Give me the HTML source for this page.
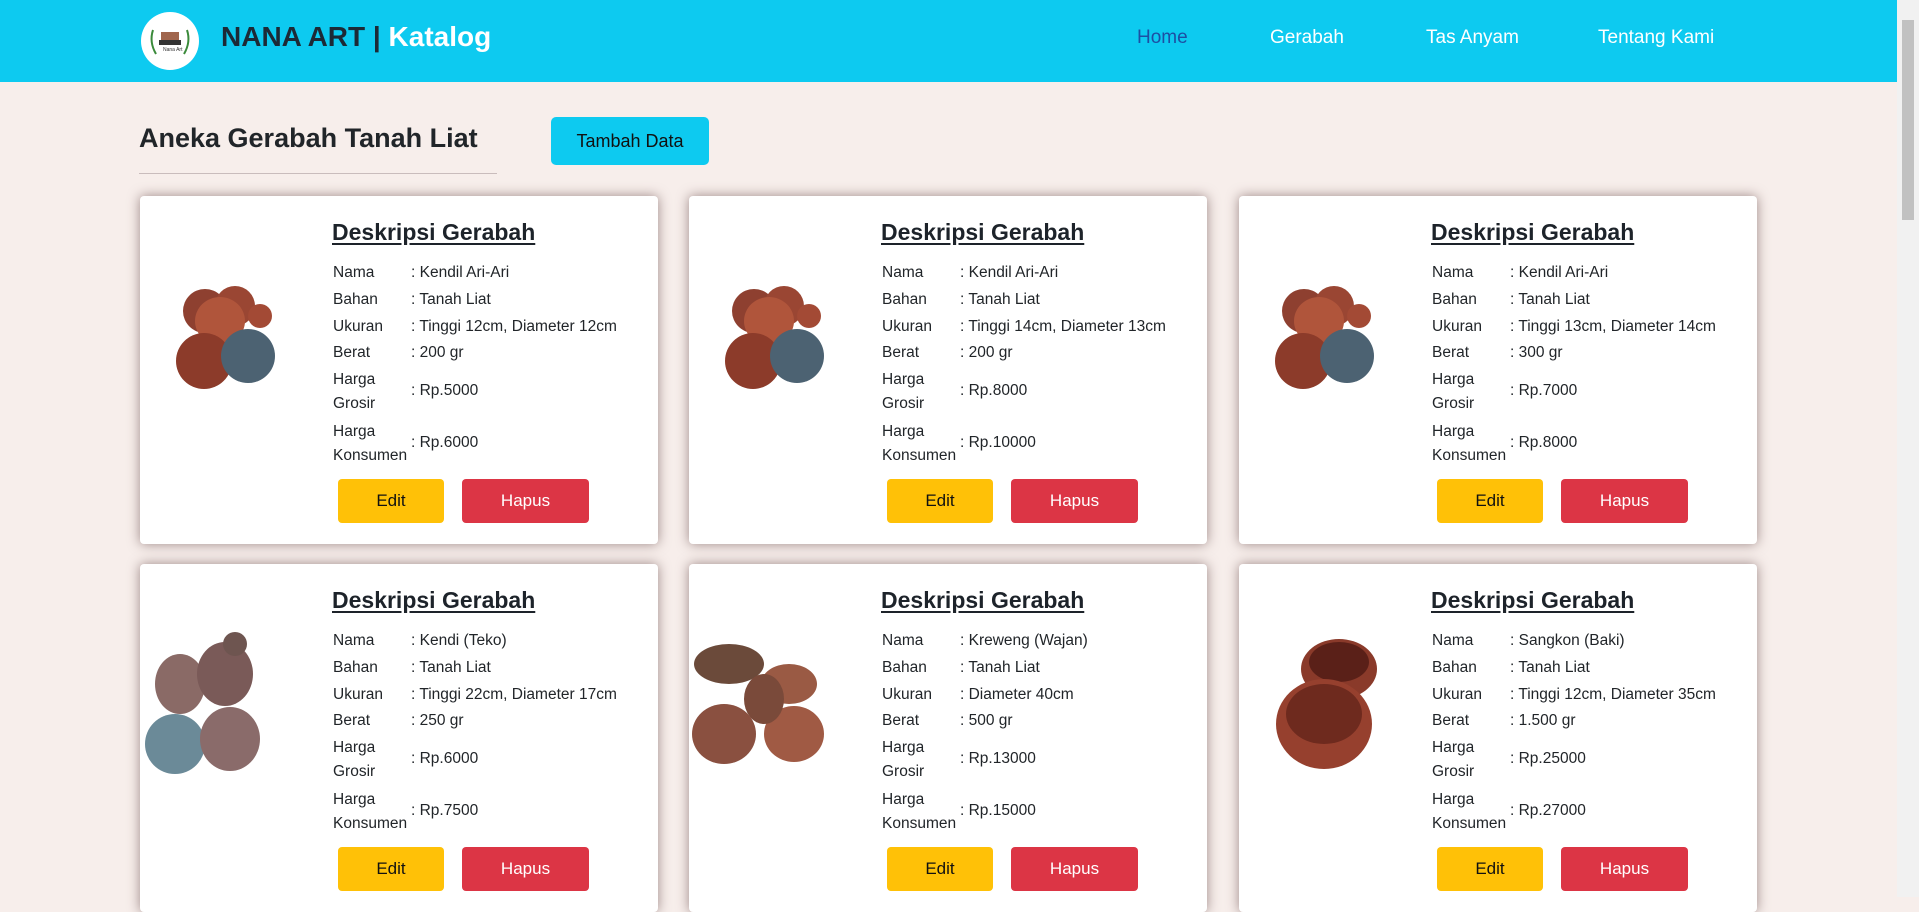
<!DOCTYPE html>
<html><head><meta charset="utf-8">
<style>
*{margin:0;padding:0;box-sizing:border-box}
body{width:1919px;height:897px;overflow:hidden;background:#f7eeeb;font-family:"Liberation Sans",sans-serif;color:#212529;position:relative}
.hdr{position:absolute;left:0;top:0;width:1897px;height:82px;background:#0dcaf0}
.logo{position:absolute;left:141px;top:12px;width:58px;height:58px;border-radius:50%;background:#fff}
.brand{position:absolute;left:221px;top:21px;font-size:28px;font-weight:bold;color:#1c2a36;white-space:nowrap}
.brand b{color:#fff}
.nav{position:absolute;top:27px;font-size:19px;color:#fff}
.sb{position:absolute;right:0;top:0;width:22px;height:897px;background:#f1f1f1}
.sb div{position:absolute;left:5px;top:20px;width:12px;height:200px;background:#c1c1c1}
h2{position:absolute;left:139px;top:123px;font-size:27px;font-weight:bold;color:#212529}
.hr{position:absolute;left:139px;top:173px;width:358px;height:1px;background:#c9bcbc}
.add{position:absolute;left:551px;top:117px;width:158px;height:48px;background:#0dcaf0;border-radius:5px;font-size:18px;text-align:center;line-height:48px;color:#111}
.card{position:absolute;width:518px;height:348px;background:#fff;border-radius:4px;box-shadow:0 0 12px rgba(80,50,50,.55)}
.card .t{position:absolute;left:192px;top:23px;font-size:23px;font-weight:bold;text-decoration:underline;text-underline-offset:3px;color:#1d232a}
.r{position:absolute;left:193px;font-size:15.5px;line-height:24px;color:#212529}
.c{position:absolute;left:271px;font-size:15.5px;line-height:24px}
.bE,.bH{position:absolute;top:283px;height:44px;border-radius:4px;text-align:center;line-height:44px;font-size:17px}
.bE{left:198px;width:106px;background:#ffc107;color:#111}
.bH{left:322px;width:127px;background:#dc3545;color:#fff}
.img{position:absolute;left:0;top:40px}
</style></head><body>
<div class="hdr">
<div class="logo"><svg width="58" height="58"><path d="M12 18q-4 12 3 24M46 18q4 12-3 24" stroke="#3a8a3a" stroke-width="2" fill="none"/><rect x="20" y="20" width="18" height="10" fill="#a0654d"/><rect x="18" y="28" width="22" height="5" fill="#333"/><text x="22" y="39" font-size="5" fill="#333">Nana Art</text></svg></div>
<div class="brand">NANA ART | <b>Katalog</b></div>
<div class="nav" style="left:1137px;color:#1d4fa3">Home</div>
<div class="nav" style="left:1270px">Gerabah</div>
<div class="nav" style="left:1426px">Tas Anyam</div>
<div class="nav" style="left:1598px">Tentang Kami</div>
</div>
<div class="sb"><div></div></div>
<h2>Aneka Gerabah Tanah Liat</h2>
<div class="hr"></div>
<div class="add">Tambah Data</div>

<div class="card" style="left:140px;top:196px">
<svg class="img" width="160" height="190"><circle cx="65" cy="75" r="22" fill="#8e4030"/><circle cx="95" cy="70" r="20" fill="#9a4633"/><ellipse cx="80" cy="85" rx="25" ry="24" fill="#b0553b"/><circle cx="64" cy="125" r="28" fill="#8c3b2a"/><circle cx="108" cy="120" r="27" fill="#4c6272"/><circle cx="120" cy="80" r="12" fill="#a34a35"/></svg>
<div class="t">Deskripsi Gerabah</div>
<div class="r" style="top:65px">Nama</div><div class="c" style="top:65px">: Kendil Ari-Ari</div>
<div class="r" style="top:92px">Bahan</div><div class="c" style="top:92px">: Tanah Liat</div>
<div class="r" style="top:119px">Ukuran</div><div class="c" style="top:119px">: Tinggi 12cm, Diameter 12cm</div>
<div class="r" style="top:145px">Berat</div><div class="c" style="top:145px">: 200 gr</div>
<div class="r" style="top:172px">Harga<br>Grosir</div><div class="c" style="top:183px">: Rp.5000</div>
<div class="r" style="top:224px">Harga<br>Konsumen</div><div class="c" style="top:235px">: Rp.6000</div>
<div class="bE">Edit</div><div class="bH">Hapus</div></div>

<div class="card" style="left:689px;top:196px">
<svg class="img" width="160" height="190"><circle cx="65" cy="75" r="22" fill="#8e4030"/><circle cx="95" cy="70" r="20" fill="#9a4633"/><ellipse cx="80" cy="85" rx="25" ry="24" fill="#b0553b"/><circle cx="64" cy="125" r="28" fill="#8c3b2a"/><circle cx="108" cy="120" r="27" fill="#4c6272"/><circle cx="120" cy="80" r="12" fill="#a34a35"/></svg>
<div class="t">Deskripsi Gerabah</div>
<div class="r" style="top:65px">Nama</div><div class="c" style="top:65px">: Kendil Ari-Ari</div>
<div class="r" style="top:92px">Bahan</div><div class="c" style="top:92px">: Tanah Liat</div>
<div class="r" style="top:119px">Ukuran</div><div class="c" style="top:119px">: Tinggi 14cm, Diameter 13cm</div>
<div class="r" style="top:145px">Berat</div><div class="c" style="top:145px">: 200 gr</div>
<div class="r" style="top:172px">Harga<br>Grosir</div><div class="c" style="top:183px">: Rp.8000</div>
<div class="r" style="top:224px">Harga<br>Konsumen</div><div class="c" style="top:235px">: Rp.10000</div>
<div class="bE">Edit</div><div class="bH">Hapus</div></div>

<div class="card" style="left:1239px;top:196px">
<svg class="img" width="160" height="190"><circle cx="65" cy="75" r="22" fill="#8e4030"/><circle cx="95" cy="70" r="20" fill="#9a4633"/><ellipse cx="80" cy="85" rx="25" ry="24" fill="#b0553b"/><circle cx="64" cy="125" r="28" fill="#8c3b2a"/><circle cx="108" cy="120" r="27" fill="#4c6272"/><circle cx="120" cy="80" r="12" fill="#a34a35"/></svg>
<div class="t">Deskripsi Gerabah</div>
<div class="r" style="top:65px">Nama</div><div class="c" style="top:65px">: Kendil Ari-Ari</div>
<div class="r" style="top:92px">Bahan</div><div class="c" style="top:92px">: Tanah Liat</div>
<div class="r" style="top:119px">Ukuran</div><div class="c" style="top:119px">: Tinggi 13cm, Diameter 14cm</div>
<div class="r" style="top:145px">Berat</div><div class="c" style="top:145px">: 300 gr</div>
<div class="r" style="top:172px">Harga<br>Grosir</div><div class="c" style="top:183px">: Rp.7000</div>
<div class="r" style="top:224px">Harga<br>Konsumen</div><div class="c" style="top:235px">: Rp.8000</div>
<div class="bE">Edit</div><div class="bH">Hapus</div></div>

<div class="card" style="left:140px;top:564px">
<svg class="img" width="160" height="190"><ellipse cx="40" cy="80" rx="25" ry="30" fill="#8a6a66"/><ellipse cx="85" cy="70" rx="28" ry="32" fill="#7a5a58"/><ellipse cx="35" cy="140" rx="30" ry="30" fill="#6b8a98"/><ellipse cx="90" cy="135" rx="30" ry="32" fill="#8a6b6a"/><circle cx="95" cy="40" r="12" fill="#6e5550"/></svg>
<div class="t">Deskripsi Gerabah</div>
<div class="r" style="top:65px">Nama</div><div class="c" style="top:65px">: Kendi (Teko)</div>
<div class="r" style="top:92px">Bahan</div><div class="c" style="top:92px">: Tanah Liat</div>
<div class="r" style="top:119px">Ukuran</div><div class="c" style="top:119px">: Tinggi 22cm, Diameter 17cm</div>
<div class="r" style="top:145px">Berat</div><div class="c" style="top:145px">: 250 gr</div>
<div class="r" style="top:172px">Harga<br>Grosir</div><div class="c" style="top:183px">: Rp.6000</div>
<div class="r" style="top:224px">Harga<br>Konsumen</div><div class="c" style="top:235px">: Rp.7500</div>
<div class="bE">Edit</div><div class="bH">Hapus</div></div>

<div class="card" style="left:689px;top:564px">
<svg class="img" width="160" height="190"><ellipse cx="40" cy="60" rx="35" ry="20" fill="#6b4a3a"/><ellipse cx="100" cy="80" rx="28" ry="20" fill="#9a5a44"/><ellipse cx="35" cy="130" rx="32" ry="30" fill="#8a5040"/><ellipse cx="105" cy="130" rx="30" ry="28" fill="#a05a44"/><ellipse cx="75" cy="95" rx="20" ry="25" fill="#7a4a3a"/></svg>
<div class="t">Deskripsi Gerabah</div>
<div class="r" style="top:65px">Nama</div><div class="c" style="top:65px">: Kreweng (Wajan)</div>
<div class="r" style="top:92px">Bahan</div><div class="c" style="top:92px">: Tanah Liat</div>
<div class="r" style="top:119px">Ukuran</div><div class="c" style="top:119px">: Diameter 40cm</div>
<div class="r" style="top:145px">Berat</div><div class="c" style="top:145px">: 500 gr</div>
<div class="r" style="top:172px">Harga<br>Grosir</div><div class="c" style="top:183px">: Rp.13000</div>
<div class="r" style="top:224px">Harga<br>Konsumen</div><div class="c" style="top:235px">: Rp.15000</div>
<div class="bE">Edit</div><div class="bH">Hapus</div></div>

<div class="card" style="left:1239px;top:564px">
<svg class="img" width="160" height="190"><ellipse cx="100" cy="65" rx="38" ry="30" fill="#8a3a2a"/><ellipse cx="100" cy="58" rx="30" ry="20" fill="#5a2018"/><ellipse cx="85" cy="120" rx="48" ry="45" fill="#96402e"/><ellipse cx="85" cy="110" rx="38" ry="30" fill="#6e2a1e"/></svg>
<div class="t">Deskripsi Gerabah</div>
<div class="r" style="top:65px">Nama</div><div class="c" style="top:65px">: Sangkon (Baki)</div>
<div class="r" style="top:92px">Bahan</div><div class="c" style="top:92px">: Tanah Liat</div>
<div class="r" style="top:119px">Ukuran</div><div class="c" style="top:119px">: Tinggi 12cm, Diameter 35cm</div>
<div class="r" style="top:145px">Berat</div><div class="c" style="top:145px">: 1.500 gr</div>
<div class="r" style="top:172px">Harga<br>Grosir</div><div class="c" style="top:183px">: Rp.25000</div>
<div class="r" style="top:224px">Harga<br>Konsumen</div><div class="c" style="top:235px">: Rp.27000</div>
<div class="bE">Edit</div><div class="bH">Hapus</div></div>
</body></html>
